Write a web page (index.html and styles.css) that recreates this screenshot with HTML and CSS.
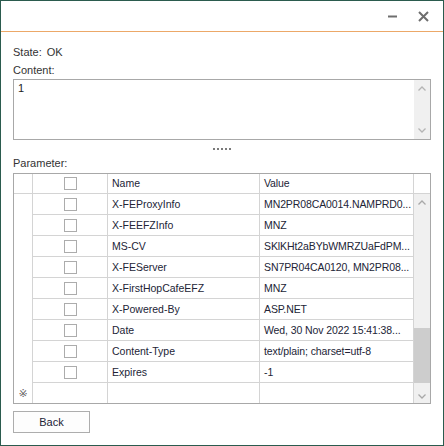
FILE: index.html
```html
<!DOCTYPE html>
<html lang="en">
  <head>
    <meta charset="UTF-8" />
    <title>Response</title>
    <link rel="stylesheet" href="styles.css">
  </head>
  <body>
    <div class="window">
      <div class="titlebar">
        <span class="tb-btn">
          <svg width="10" height="10" viewBox="0 0 10 10">
            <path d="M0 5.5h9" stroke="#6e6e6e" stroke-width="2" />
          </svg>
        </span>
        <span class="tb-btn">
          <svg width="11" height="11" viewBox="0 0 11 11">
            <path d="M1 1l9 9M10 1l-9 9" stroke="#6e6e6e" stroke-width="2" />
          </svg>
        </span>
      </div>

      <div class="content">
        <div class="state"><span>State:</span><span class="state-value">OK</span></div>
        <div class="label">Content:</div>
        <div class="memo">
          <div class="memo-text">1</div>
          <div class="vscroll memo-scroll">
            <svg class="arrow" width="8" height="5" viewBox="0 0 8 5"><path d="M0.5 4.5l3.5-3.5 3.5 3.5" fill="none" stroke="#b4b4b4" stroke-width="1.3" /></svg>
            <svg class="arrow" width="8" height="5" viewBox="0 0 8 5"><path d="M0.5 0.5l3.5 3.5 3.5-3.5" fill="none" stroke="#b4b4b4" stroke-width="1.3" /></svg>
          </div>
        </div>

        <div class="splitter"><i></i><i></i><i></i><i></i><i></i></div>

        <div class="label">Parameter:</div>
        <div class="grid">
          <div class="grid-head">
            <div class="c-ind"></div>
            <div class="c-chk"><span class="check"></span></div>
            <div class="c-name">Name</div>
            <div class="c-val">Value</div>
            <div class="c-scroll"></div>
          </div>
          <div class="grid-body">
            <div class="rows">
              <div class="row"><div class="c-ind"></div><div class="c-chk"><span class="check"></span></div><div class="c-name">X-FEProxyInfo</div><div class="c-val">MN2PR08CA0014.NAMPRD0...</div></div>
              <div class="row"><div class="c-ind"></div><div class="c-chk"><span class="check"></span></div><div class="c-name">X-FEEFZInfo</div><div class="c-val">MNZ</div></div>
              <div class="row"><div class="c-ind"></div><div class="c-chk"><span class="check"></span></div><div class="c-name">MS-CV</div><div class="c-val">SKlKHt2aBYbWMRZUaFdPM...</div></div>
              <div class="row"><div class="c-ind"></div><div class="c-chk"><span class="check"></span></div><div class="c-name">X-FEServer</div><div class="c-val">SN7PR04CA0120, MN2PR08...</div></div>
              <div class="row"><div class="c-ind"></div><div class="c-chk"><span class="check"></span></div><div class="c-name">X-FirstHopCafeEFZ</div><div class="c-val">MNZ</div></div>
              <div class="row"><div class="c-ind"></div><div class="c-chk"><span class="check"></span></div><div class="c-name">X-Powered-By</div><div class="c-val">ASP.NET</div></div>
              <div class="row"><div class="c-ind"></div><div class="c-chk"><span class="check"></span></div><div class="c-name">Date</div><div class="c-val">Wed, 30 Nov 2022 15:41:38...</div></div>
              <div class="row"><div class="c-ind"></div><div class="c-chk"><span class="check"></span></div><div class="c-name">Content-Type</div><div class="c-val">text/plain; charset=utf-8</div></div>
              <div class="row"><div class="c-ind"></div><div class="c-chk"><span class="check"></span></div><div class="c-name">Expires</div><div class="c-val">-1</div></div>
              <div class="row new-row"><div class="c-ind">※</div><div class="c-chk"></div><div class="c-name"></div><div class="c-val"></div></div>
            </div>
            <div class="vscroll grid-scroll">
              <svg class="arrow" width="8" height="5" viewBox="0 0 8 5"><path d="M0.5 4.5l3.5-3.5 3.5 3.5" fill="none" stroke="#a8a8a8" stroke-width="1.3" /></svg>
              <div class="thumb"></div>
              <svg class="arrow" width="8" height="5" viewBox="0 0 8 5"><path d="M0.5 0.5l3.5 3.5 3.5-3.5" fill="none" stroke="#a8a8a8" stroke-width="1.3" /></svg>
            </div>
          </div>
        </div>

        <button class="btn">Back</button>
      </div>
    </div>
  </body>
</html>
```

FILE: styles.css
```css
* {
  margin: 0;
  padding: 0;
  box-sizing: border-box;
}

body {
  font-family: "Liberation Sans", Arial, sans-serif;
  font-size: 11px;
  color: #333;
  background: #fff;
}

.window {
  width: 444px;
  height: 446px;
  border: 1px solid #2b5b4e;
  background: #fff;
}

.titlebar {
  height: 31px;
  border-bottom: 1px solid #eca868;
  display: flex;
  justify-content: flex-end;
  padding-right: 5px;
}

.tb-btn {
  width: 30px;
  height: 30px;
  display: flex;
  justify-content: center;
  align-items: center;
}

.content {
  padding: 14px 12px 0;
}

.state,
.label {
  line-height: 13px;
  height: 13px;
}

.state-value {
  margin-left: 5px;
}

.label {
  margin-top: 5px;
}

.memo {
  margin-top: 2px;
  height: 61px;
  border: 1px solid #a8a8a8;
  display: flex;
}

.memo-text {
  flex: 1;
  padding: 2px 4px;
  line-height: 13px;
  color: #222;
}

.vscroll {
  width: 16px;
  background: #f0f0f0;
  display: flex;
  flex-direction: column;
  align-items: center;
  justify-content: space-between;
}

.memo-scroll {
  padding: 6px 0 6px;
}

.splitter {
  height: 17px;
  display: flex;
  justify-content: center;
  align-items: center;
  gap: 2px;
  padding-top: 1px;
}

.splitter i {
  width: 2px;
  height: 2px;
  background: #7a7a7a;
}

.splitter + .label {
  margin-top: 0;
}

.grid {
  margin-top: 3px;
  height: 231px;
  border: 1px solid #a8a8a8;
  color: #222436;
  font-size: 10.5px;
}

.grid-head {
  display: flex;
  height: 20px;
  border-bottom: 1px solid #d4d4d4;
}

.grid-head > div {
  line-height: 19px;
}

.c-ind {
  width: 19px;
  border-right: 1px solid #d4d4d4;
  flex: none;
}

.c-chk {
  width: 75px;
  border-right: 1px solid #d4d4d4;
  display: flex;
  justify-content: center;
  align-items: center;
  flex: none;
}

.c-name {
  width: 152px;
  border-right: 1px solid #d4d4d4;
  padding-left: 4px;
  flex: none;
  white-space: nowrap;
  overflow: hidden;
}

.c-val {
  width: 154px;
  border-right: 1px solid #d4d4d4;
  padding-left: 4px;
  flex: none;
  white-space: nowrap;
  overflow: hidden;
  letter-spacing: -0.1px;
}

.c-scroll {
  width: 16px;
  flex: none;
}

.check {
  width: 13px;
  height: 13px;
  border: 1px solid #acacac;
  background: #fff;
}

.grid-body {
  display: flex;
  height: 209px;
}

.rows {
  width: 400px;
}

.row {
  display: flex;
  height: 21px;
}

.row > div {
  line-height: 20px;
  border-bottom: 1px solid #d4d4d4;
}

.row > .c-ind {
  border-bottom: none;
}

.row.new-row {
  height: 20px;
}

.row.new-row > div {
  border-bottom: none;
}

.new-row .c-ind {
  font-family: "DejaVu Sans", sans-serif;
  font-size: 11px;
  color: #666;
  text-align: center;
  line-height: 21px;
}

.grid-scroll {
  padding: 6px 0 4px;
  position: relative;
}

.thumb {
  position: absolute;
  left: 0;
  top: 134px;
  width: 16px;
  height: 55px;
  background: #cdcdcd;
}

.btn {
  margin-top: 7px;
  width: 77px;
  height: 22px;
  border: 1px solid #adadad;
  background: #fdfdfd;
  font-family: "Liberation Sans", Arial, sans-serif;
  font-size: 11px;
  color: #222436;
}
```
